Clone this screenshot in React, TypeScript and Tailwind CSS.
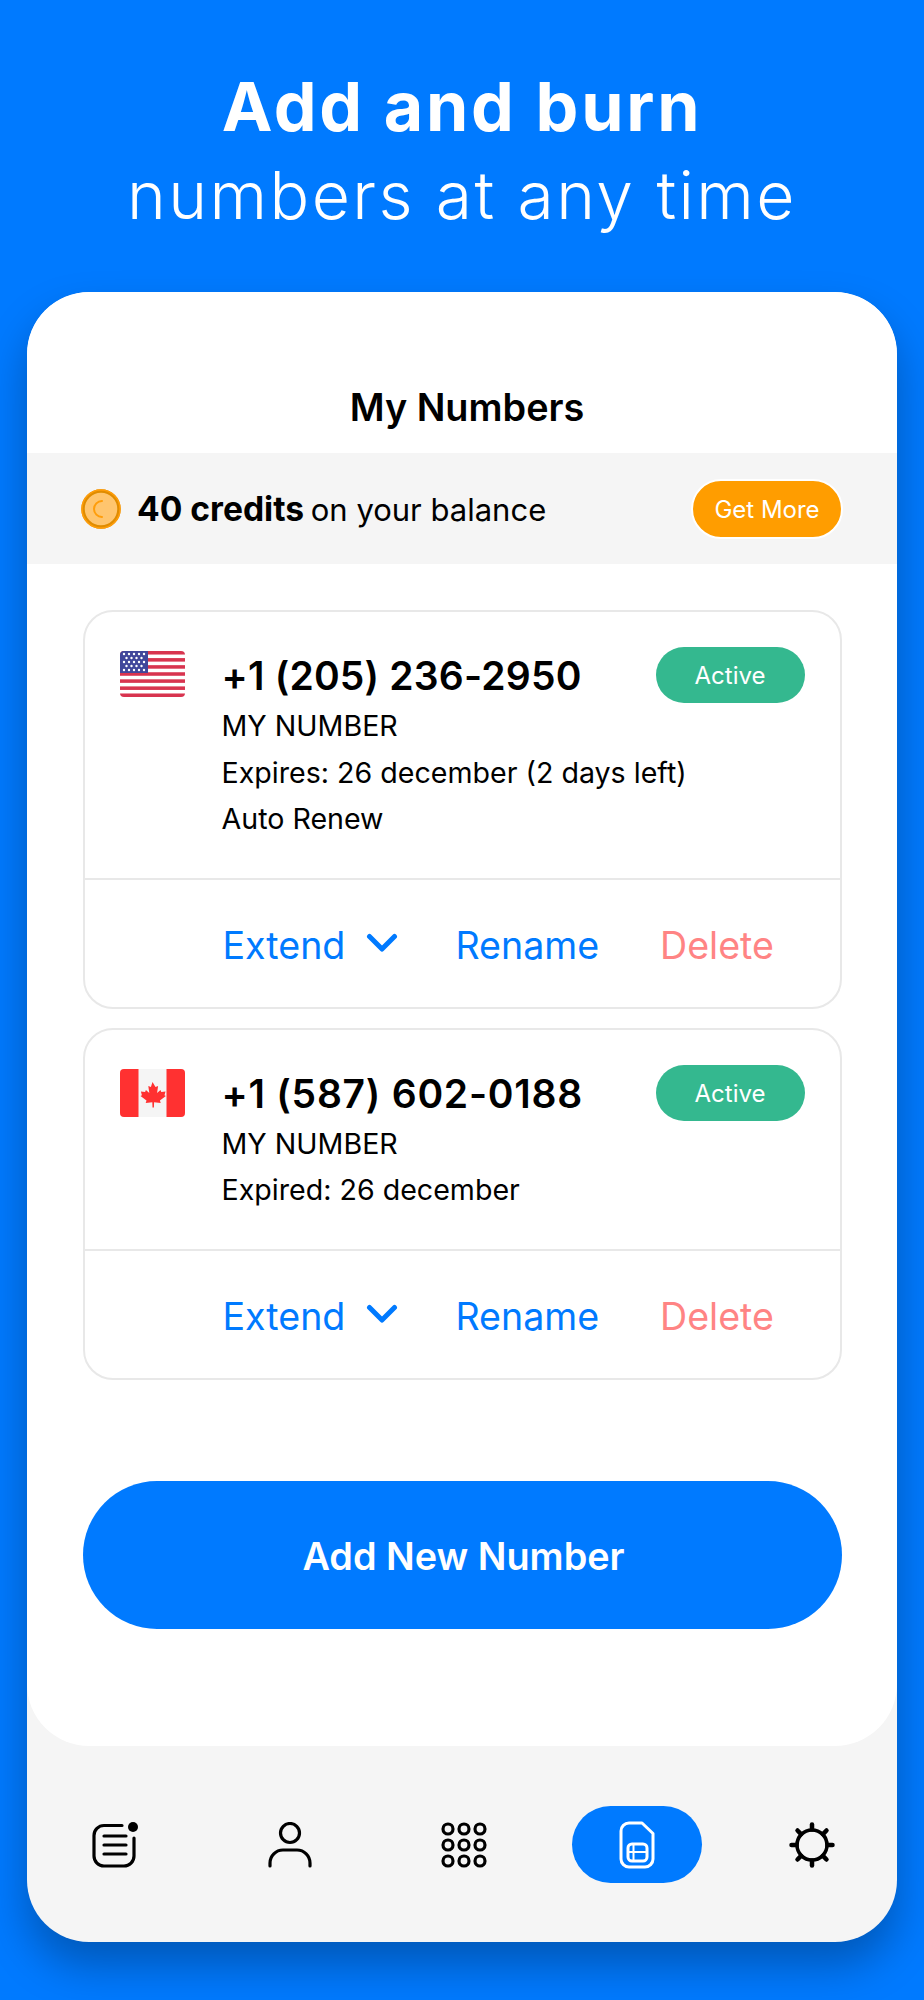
const font = { fontFamily: '"Inter", "Liberation Sans", sans-serif' };

function UsFlag() {
  const stripes = [0, 1, 2, 3, 4, 5, 6];
  const stars: number[][] = [];
  for (let r = 0; r < 5; r++) {
    const n = r % 2 === 0 ? 5 : 4;
    for (let c = 0; c < n; c++) stars.push([r % 2 === 0 ? 4 + c * 5 : 6.5 + c * 5, 3 + r * 4]);
  }
  return (
    <svg width="65" height="46" viewBox="0 0 65 46" className="rounded-[4px]">
      <rect width="65" height="46" fill="#fff" />
      {stripes.map((i) => (
        <rect key={i} y={i * 7.08} width="65" height="3.54" fill="#d8344f" />
      ))}
      <rect width="28" height="22" fill="#41479b" />
      {stars.map(([x, y], i) => (
        <circle key={i} cx={x} cy={y} r="1.2" fill="#fff" />
      ))}
    </svg>
  );
}

function CaFlag() {
  return (
    <svg width="65" height="48" viewBox="0 0 65 48" className="rounded-[4px]">
      <rect width="65" height="48" fill="#f5f5f5" />
      <rect width="18.5" height="48" fill="#ff3131" />
      <rect x="46.5" width="18.5" height="48" fill="#ff3131" />
      <path
        d="M32.5 13l3 5 2.6-1-1 7 3.4-3 .8 2 4.2-.6-1 3.8 1.4.8-6 4.6.8 2.4-6.6-.8-.2 5.2h-1.4l-.2-5.2-6.6.8.8-2.4-6-4.6 1.4-.8-1-3.8 4.2.6.8-2 3.4 3-1-7 2.600 1z"
        fill="#ff3131"
      />
    </svg>
  );
}

function Card({ flag, number, lines, numberClass }: { flag: React.ReactNode; number: string; lines: string[]; numberClass: string }) {
  return (
    <div className="w-[759px] rounded-[30px] border-2 border-[#e8e8e8] bg-white">
      <div className="relative pl-[137px] pt-[43px] pb-[35px]">
        <div className="absolute left-[35px] top-[39px]">{flag}</div>
        <div className={`text-[39px] leading-[42px] font-semibold text-black ${numberClass}`}>{number}</div>
        <div className="mt-[6px]">
          {lines.map((l) => (
            <div key={l} className="text-[28.6px] leading-[46.5px] text-black">{l}</div>
          ))}
        </div>
        <div className="absolute right-[35px] top-[35px] flex h-[56px] w-[149px] items-center justify-center rounded-full bg-[#34b88f] pt-[2px] text-[24px] text-white">
          Active
        </div>
      </div>
      <div className="flex h-[129px] items-center border-t-2 border-[#e8e8e8] pl-[138px] text-[37.6px] text-[#007aff]">
        <span className="pt-[7px]">Extend</span>
        <svg width="32" height="22" viewBox="0 0 32 22" className="ml-[21px]" fill="none" stroke="#007aff" strokeWidth="5" strokeLinecap="round" strokeLinejoin="round">
          <path d="M3.500 4.500L16 17 28.500 4.500" />
        </svg>
        <span className="ml-[57px] pt-[7px]">Rename</span>
        <span className="ml-[61px] pt-[7px] text-[#ff8484]">Delete</span>
      </div>
    </div>
  );
}

export default function App() {
  return (
    <div className="flex h-[2000px] w-[924px] flex-col items-center overflow-hidden bg-[#007aff]" style={font}>
      <div className="pt-[61px] text-center text-white">
        <div className="text-[68px] leading-[90px] font-bold tracking-[2.75px]">Add and burn</div>
        <div className="text-[66px] leading-[88px] font-[350] tracking-[2.4px]">numbers at any time</div>
      </div>
      <div className="mt-[53px] flex h-[1650px] w-[870px] flex-col overflow-hidden rounded-[62px] bg-[#f5f5f5] shadow-[0_24px_44px_rgba(0,0,0,0.28)]">
        <div className="flex h-[1454px] flex-col rounded-[62px] bg-white">
          <div className="flex h-[161px] items-end justify-center pb-[24px] pl-[10px] text-[37.8px] leading-[44px] font-semibold text-black">
            My Numbers
          </div>
          <div className="flex h-[111px] items-center bg-[#f5f5f5] pl-[54px] pr-[54px]">
            <svg width="40" height="40" viewBox="0 0 40 40">
              <circle cx="20" cy="20" r="18" fill="#ffc56e" stroke="#e08c00" strokeWidth="3.500" />
              <circle cx="20" cy="20" r="19" fill="none" stroke="#ff9d0a" strokeWidth="1.500" />
              <path d="M21 12a8 8 0 0 0 0 16" fill="none" stroke="#ff9d0a" strokeWidth="2" strokeLinecap="round" />
            </svg>
            <div className="ml-[16px] pt-[1px] text-[31px] text-black">
              <span className="mr-[-2px] text-[33.6px] font-bold">40 credits</span> on your balance
            </div>
            <div className="ml-auto flex h-[60px] w-[152px] items-center justify-center rounded-full border-2 border-white bg-[#ff9d00] pt-[2px] text-[24px] text-white">
              Get More
            </div>
          </div>
          <div className="flex flex-col items-center gap-[19px] pt-[46px]">
            <Card flag={<UsFlag />} numberClass="tracking-[0.2px]" number="+1 (205) 236-2950" lines={["MY NUMBER", "Expires: 26 december (2 days left)", "Auto Renew"]} />
            <Card flag={<CaFlag />} numberClass="tracking-[0.75px]" number="+1 (587) 602-0188" lines={["MY NUMBER", "Expired: 26 december"]} />
          </div>
          <div className="mx-auto mt-[101px] flex h-[148px] w-[759px] items-center justify-center rounded-full bg-[#007aff] pl-[3px] pt-[3px] text-[37.8px] font-semibold text-white">
            Add New Number
          </div>
        </div>
        <div className="flex flex-1 items-start pt-[60px]">
          <div className="flex w-full items-center pl-[64px]">
            <div className="flex h-[77px] w-[48px] items-center justify-center">
              <svg width="48" height="48" viewBox="0 0 48 48" fill="none" stroke="#000" strokeWidth="3.200" strokeLinecap="round">
                <path d="M31 4.500H13a10 10 0 0 0-10 10V35a10 10 0 0 0 10 10h20a10 10 0 0 0 10-10V17" />
                <path d="M13 15h22M13 24h22M13 33h22" />
                <circle cx="42" cy="6" r="5" fill="#000" stroke="none" />
              </svg>
            </div>
            <svg width="44" height="46" viewBox="0 0 44 46" fill="none" stroke="#000" strokeWidth="3.200" strokeLinecap="round" className="ml-[129px]">
              <circle cx="22" cy="11" r="9.500" />
              <path d="M2 44v-3a13 13 0 0 1 13-13h14a13 13 0 0 1 13 13v3" />
            </svg>
            <svg width="46" height="48" viewBox="0 0 46 48" fill="none" stroke="#000" strokeWidth="3.200" className="ml-[129px]">
              {[7, 23, 39].map((x) => [8, 24, 40].map((y) => <circle key={`${x}-${y}`} cx={x} cy={y} r="5" />))}
            </svg>
            <div className="ml-[85px] flex h-[77px] w-[130px] items-center justify-center rounded-full bg-[#007aff]">
              <svg width="36" height="48" viewBox="0 0 36 48" fill="none" stroke="#fff" strokeWidth="3">
                <path d="M10 2h13l11 10.500V38a8 8 0 0 1-8 8H10a8 8 0 0 1-8-8V10a8 8 0 0 1 8-8z" strokeLinejoin="round" />
                <rect x="9" y="23" width="19" height="17" rx="4" />
                <path d="M9 31h19M14.500 23v17" strokeWidth="2" />
              </svg>
            </div>
            <svg width="46" height="46" viewBox="0 0 46 46" fill="#000" stroke="#000" className="ml-[87px]">
              <circle cx="23" cy="23" r="15" fill="none" strokeWidth="3.600" />
              {[0, 45, 90, 135, 180, 225, 270, 315].map((a) => (
                <path key={a} d="M23 2.500v5" strokeWidth="4.500" strokeLinecap="round" transform={`rotate(${a} 23 23)`} />
              ))}
            </svg>
          </div>
        </div>
      </div>
    </div>
  );
}
